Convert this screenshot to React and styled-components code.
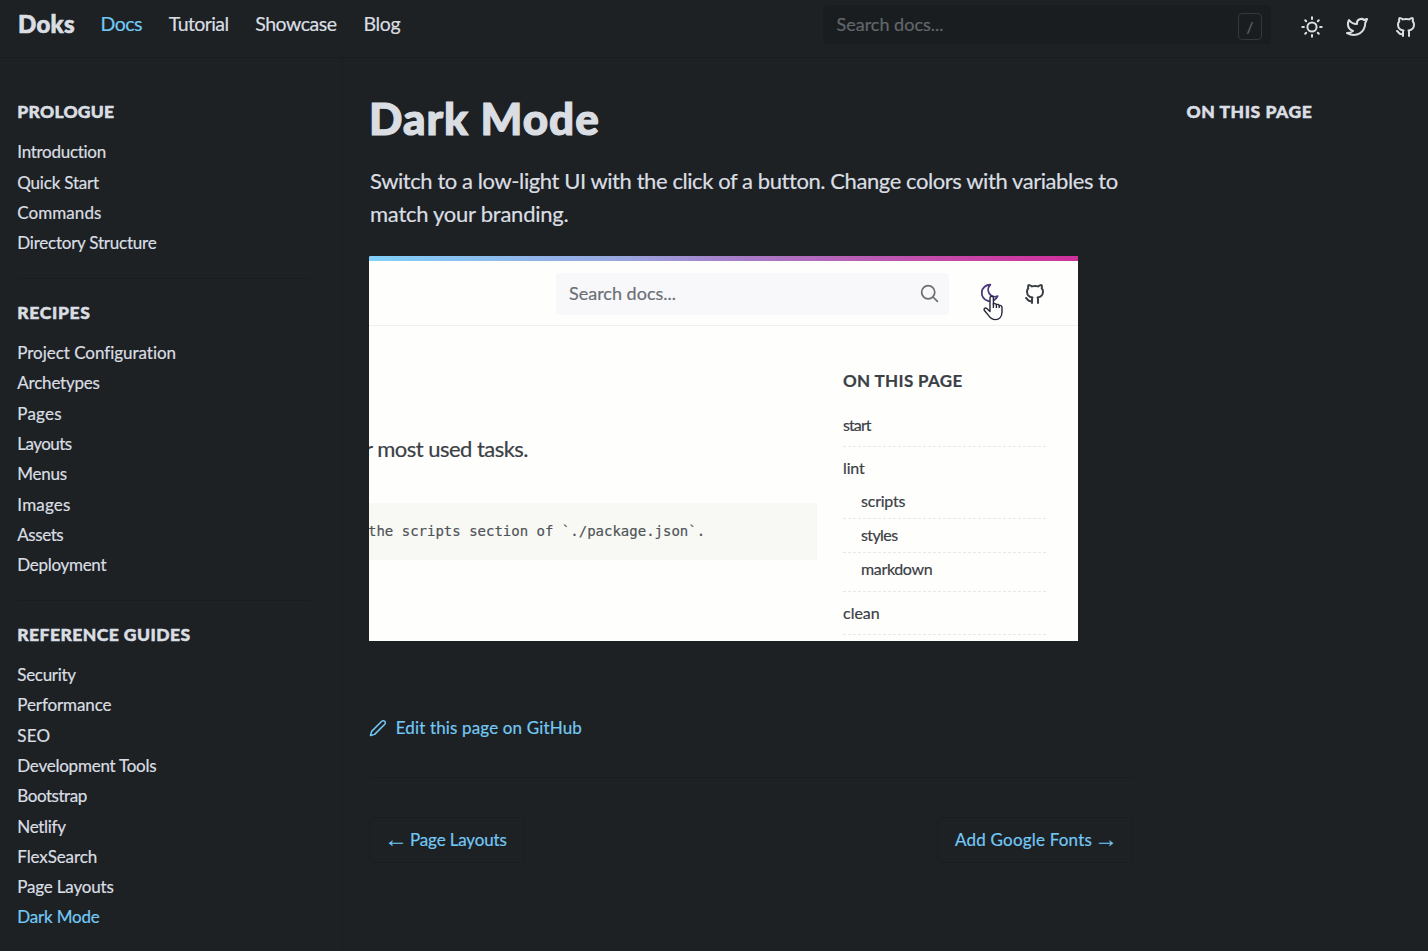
import React from "react";
import styled, { createGlobalStyle } from "styled-components";

const color = {
  bg: "#1d2124",
  line: "#1a1d20",
  field: "#1a1d1f",
  text: "#dadee2",
  muted: "#60676d",
  link: "#73c8f4",
};

const GlobalStyle = createGlobalStyle`
  *, *::before, *::after { box-sizing: border-box; }
  body {
    margin: 0;
    background: ${color.bg};
    color: ${color.text};
    font-family: "Lato", "Liberation Sans", sans-serif;
    font-size: 17px;
    -webkit-text-stroke: 0.2px currentColor;
    overflow: hidden;
  }
  a { color: inherit; text-decoration: none; }
  svg { display: block; flex: none; }
`;

const Page = styled.div`
  height: 951px;
  display: flex;
  flex-direction: column;
`;

/* Header */
const Header = styled.header`
  flex: none;
  height: 58px;
  display: flex;
  align-items: flex-start;
  padding-left: 18px;
  border-bottom: 1px solid ${color.line};
`;

const Brand = styled.a`
  width: 82.5px;
  padding-top: 9px;
  font-weight: 900;
  font-size: 24px;
  line-height: 30px;
  letter-spacing: 0.3px;
  -webkit-text-stroke-width: 0.7px;
`;

const Nav = styled.nav`
  flex: 1;
  display: flex;
  gap: 26.8px;
  padding-top: 9px;
`;

const NavLink = styled.a`
  font-size: 19.5px;
  line-height: 30px;
  letter-spacing: ${(p) => p.$track}px;
  color: ${(p) => (p.$active ? color.link : "inherit")};
`;

const SearchField = styled.div`
  width: 448px;
  height: 39px;
  margin-top: 5px;
  padding: 0 9px 0 13.5px;
  display: flex;
  align-items: center;
  justify-content: space-between;
  border-radius: 4px;
  background: ${color.field};
  color: ${color.muted};
  font-size: 18px;
`;

const Placeholder = styled.span`
  padding-bottom: ${(p) => p.$lift}px;
`;

const Key = styled.kbd`
  width: 24px;
  height: 27px;
  margin-top: 4px;
  display: flex;
  align-items: center;
  justify-content: center;
  border: 1px solid #33383c;
  border-radius: 4px;
  font-family: inherit;
  font-size: 15px;
`;

const Actions = styled.div`
  display: flex;
  padding: 15px 10px 0 29px;
`;

const IconLink = styled.a`
  width: 24px;
  margin-right: ${(p) => p.$gap || 0}px;
`;

/* Sidebar */
const Columns = styled.div`
  flex: 1;
  min-height: 0;
  display: flex;
`;

const Sidebar = styled.aside`
  width: 343px;
  flex: none;
  padding: 39.3px 31px 0 17.3px;
  border-right: 1px solid ${color.line};
`;

const Section = styled.section`
  & + & {
    margin-top: 19.1px;
    padding-top: 19.5px;
    border-top: 1px solid ${color.line};
  }
`;

const SectionTitle = styled.h3`
  margin: 0;
  font-weight: 900;
  font-size: 17.5px;
  line-height: 30px;
  white-space: nowrap;
  letter-spacing: ${(p) => p.$track}px;
  -webkit-text-stroke-width: 0.5px;
`;

const LinkList = styled.ul`
  list-style: none;
  margin: 10px 0 0;
  padding: 0;
`;

const LinkItem = styled.li`
  height: 30.3px;
  line-height: 30.3px;
  letter-spacing: ${(p) => p.$track}px;
  color: ${(p) => (p.$active ? color.link : "inherit")};
`;

/* Article */
const Article = styled.main`
  width: 764px;
  margin-left: 26px;
  padding-top: 35px;
`;

const Title = styled.h1`
  margin: 0;
  font-weight: 900;
  font-size: 44px;
  line-height: 50px;
  letter-spacing: 1px;
  -webkit-text-stroke-width: 1.2px;
`;

const Lead = styled.p`
  margin: 21px 0 26px 1px;
  font-size: 22px;
  line-height: 33px;
  white-space: nowrap;
`;

const LeadLine = styled.span`
  display: block;
  letter-spacing: ${(p) => p.$track}px;
`;

const EditLink = styled.a`
  display: flex;
  align-items: center;
  gap: 8.7px;
  margin-top: 73px;
  line-height: 27px;
  letter-spacing: 0.15px;
  color: ${color.link};
`;

const Pager = styled.nav`
  margin-top: 36px;
  padding-top: 39px;
  display: flex;
  justify-content: space-between;
  border-top: 1px solid ${color.line};
`;

const PagerLink = styled.a`
  height: 46px;
  padding: 0 17px 2px;
  display: flex;
  align-items: center;
  gap: 5px;
  border: 1px solid ${color.line};
  border-radius: 4px;
  letter-spacing: ${(p) => p.$track}px;
  color: ${color.link};
`;

const Arrow = styled.span`
  width: 18px;
  display: flex;
  justify-content: center;
  font-family: "Liberation Serif", serif;
  font-size: 24px;
  line-height: 18px;
  letter-spacing: 0;
  -webkit-text-stroke-width: 0;
`;

const Aside = styled.aside`
  margin-left: 53.5px;
  padding-top: 39.3px;
`;

/* Light-mode preview */
const Preview = styled.figure`
  width: 709px;
  height: 385px;
  margin: 0;
  overflow: hidden;
  border-top-left-radius: 2px;
  background: #fefefd;
  color: #3b4045;
`;

const Ribbon = styled.div`
  height: 4.5px;
  background: linear-gradient(90deg, #80d0fb 0%, #99a6df 36%, #a87dc9 52%, #c44ba9 80%, #d0309b 100%);
`;

const PreviewHeader = styled.div`
  height: 65.5px;
  padding: 12px 30px 0 187px;
  display: flex;
  border-bottom: 1.5px solid #efefef;
`;

const PreviewSearch = styled.div`
  width: 393px;
  height: 42px;
  padding: 0 9px 0 13px;
  display: flex;
  align-items: center;
  justify-content: space-between;
  border-radius: 4px;
  background: #f8f8fb;
  color: #6b7075;
  font-size: 18px;
`;

const PreviewAction = styled.div`
  position: relative;
  margin: 9px 0 0 ${(p) => p.$gap}px;
`;

const Pointer = styled.svg`
  position: absolute;
  left: 4px;
  top: 13px;
`;

const PreviewBody = styled.div`
  display: flex;
`;

const PreviewMain = styled.div`
  width: 448px;
  padding-top: 106px;
`;

const PreviewLead = styled.p`
  margin: 0 0 0 -4px;
  font-size: 22px;
  line-height: 34px;
  letter-spacing: -0.52px;
  white-space: nowrap;
`;

const Code = styled.pre`
  height: 57px;
  margin: 37px 0 0;
  text-indent: -1px;
  line-height: 57px;
  font-family: "DejaVu Sans Mono", monospace;
  font-size: 14px;
  color: #505558;
  background: #f8f9f5;
`;

const PreviewToc = styled.div`
  width: 203px;
  margin-left: 26px;
  padding-top: 40px;
`;

const TocTitle = styled.div`
  margin-bottom: 13px;
  font-weight: 700;
  line-height: 30px;
  letter-spacing: 0.35px;
`;

const TocRow = styled.div`
  padding: ${(p) => p.$top || 0}px 0 ${(p) => p.$bottom || 0}px ${(p) => (p.$nested ? 18 : 0)}px;
  border-bottom: ${(p) => (p.$plain ? "0" : "1px dashed #e6e8ea")};
  font-size: 16px;
  line-height: 31px;
  letter-spacing: ${(p) => p.$track}px;
`;

function Icon({ size = 24, stroke = 2, children }) {
  return (
    <svg width={size} height={size} viewBox="0 0 24 24" fill="none" stroke="currentColor"
      strokeWidth={stroke} strokeLinecap="round" strokeLinejoin="round">
      {children}
    </svg>
  );
}

const SunIcon = () => (
  <Icon>
    <circle cx="12" cy="12" r="4.6" />
    <path d="M2.300 12h1.600m8.100-9.700v1.600m8.100 8.100h1.600m-9.700 8.100v1.600M5.200 5.200l1 1m12.600-1-1 1m0 11.600 1 1m-12.600-1-1 1" />
  </Icon>
);

const TwitterIcon = () => (
  <Icon>
    <path d="M22 4.01c-1 .49-1.98.689-3 .99-1.121-1.265-2.783-1.335-4.38-.737S11.977 6.323 12 8v1c-3.245.083-6.135-1.395-8-4 0 0-4.182 7.433 4 11-1.872 1.247-3.739 2.088-6 2 3.308 1.803 6.913 2.423 10.034 1.517 3.58-1.04 6.522-3.723 7.651-7.742a13.84 13.84 0 0 0 .497-3.753c0-.249 1.51-2.772 1.818-4.013z" />
  </Icon>
);

const GithubIcon = () => (
  <Icon>
    <path d="M9 19c-4.3 1.4-4.3-2.5-6-3m12 5v-3.5c0-1 .1-1.4-.5-2 2.8-.3 5.5-1.4 5.5-6a4.6 4.6 0 0 0-1.3-3.2 4.2 4.2 0 0 0-.1-3.2s-1.1-.3-3.5 1.3a12.3 12.3 0 0 0-6.2 0C6.5 2.8 5.4 3.1 5.4 3.1a4.2 4.2 0 0 0-.1 3.2A4.6 4.6 0 0 0 4 9.5c0 4.6 2.7 5.7 5.5 6-.6.6-.6 1.2-.5 2V21" />
  </Icon>
);

const PencilIcon = () => (
  <Icon size={18}>
    <path d="M17 3a2.828 2.828 0 1 1 4 4L7.5 20.5 2 22l1.5-5.5L17 3z" />
  </Icon>
);

const SearchIcon = () => (
  <Icon size={21}>
    <circle cx="10.5" cy="10.5" r="7.5" />
    <path d="m21 21-5-5" />
  </Icon>
);

const MoonIcon = () => (
  <Icon size={22}>
    <path d="M12 3h.393a7.5 7.5 0 0 0 7.92 12.446A9 9 0 1 1 12 2.992z" stroke="#4d3a7d" />
  </Icon>
);

const sections = [
  { title: "PROLOGUE", track: 0.25, links: [
    ["Introduction", -0.28], ["Quick Start", -0.2], ["Commands", 0.06], ["Directory Structure", -0.23],
  ] },
  { title: "RECIPES", track: 0.65, links: [
    ["Project Configuration", -0.03], ["Archetypes", -0.21], ["Pages", 0.2], ["Layouts", -0.54],
    ["Menus", -0.28], ["Images", 0.2], ["Assets", -0.45], ["Deployment", -0.3],
  ] },
  { title: "REFERENCE GUIDES", track: 0.45, links: [
    ["Security", -0.3], ["Performance", -0.1], ["SEO", 0.2], ["Development Tools", -0.24],
    ["Bootstrap", -0.46], ["Netlify", -0.3], ["FlexSearch", -0.1], ["Page Layouts", -0.18], ["Dark Mode", -0.19],
  ] },
];

const tocRows = [
  { label: "start", $track: -0.9, $bottom: 6 },
  { label: "lint", $track: -0.14, $top: 5, $plain: true },
  { label: "scripts", $track: -0.22, $top: 2, $bottom: 2, $nested: true },
  { label: "styles", $track: -0.6, $bottom: 2, $nested: true },
  { label: "markdown", $track: -0.35, $nested: true, $bottom: 7 },
  { label: "clean", $track: 0, $top: 5, $bottom: 6 },
];

function LightPreview() {
  return (
    <Preview>
      <Ribbon />
      <PreviewHeader>
        <PreviewSearch>
          <Placeholder $lift={2}>Search docs...</Placeholder>
          <SearchIcon />
        </PreviewSearch>
        <PreviewAction $gap={30}>
          <MoonIcon />
          <Pointer width="21" height="26" viewBox="0 0 21 26" fill="#fff" stroke="#26263a" strokeWidth="1.4" strokeLinejoin="round">
            <path d="M7 14.500V3a1.700 1.700 0 0 1 3.400 0v6.200c.6-1 2.800-.8 3 .6.8-.8 2.600-.5 2.800.9.9-.6 2.800-.2 2.800 1.600V17c0 4.600-2.700 7.600-6.500 7.600-3.700 0-5.100-1.400-6.600-3.700L1.400 15.500c-1-1.900.9-3.300 2.400-1.900L7 16.500z" />
            <path d="M10.400 8.500v4.500m3-3v3m2.800-2.400V13" fill="none" />
          </Pointer>
        </PreviewAction>
        <PreviewAction $gap={22}>
          <GithubIcon />
        </PreviewAction>
      </PreviewHeader>
      <PreviewBody>
        <PreviewMain>
          <PreviewLead>r most used tasks.</PreviewLead>
          <Code>the scripts section of `./package.json`.</Code>
        </PreviewMain>
        <PreviewToc>
          <TocTitle>ON THIS PAGE</TocTitle>
          {tocRows.map(({ label, ...row }) => (
            <TocRow key={label} {...row}>{label}</TocRow>
          ))}
        </PreviewToc>
      </PreviewBody>
    </Preview>
  );
}

export default function App() {
  return (
    <Page>
      <GlobalStyle />
      <Header>
        <Brand href="#">Doks</Brand>
        <Nav>
          <NavLink href="#" $track={-0.5} $active>Docs</NavLink>
          <NavLink href="#" $track={-0.6}>Tutorial</NavLink>
          <NavLink href="#" $track={-0.47}>Showcase</NavLink>
          <NavLink href="#" $track={-0.35}>Blog</NavLink>
        </Nav>
        <SearchField>
          <Placeholder $lift={1}>Search docs...</Placeholder>
          <Key>/</Key>
        </SearchField>
        <Actions>
          <IconLink href="#" $gap={21}><SunIcon /></IconLink>
          <IconLink href="#" $gap={25}><TwitterIcon /></IconLink>
          <IconLink href="#"><GithubIcon /></IconLink>
        </Actions>
      </Header>
      <Columns>
        <Sidebar>
          {sections.map((s) => (
            <Section key={s.title}>
              <SectionTitle $track={s.track}>{s.title}</SectionTitle>
              <LinkList>
                {s.links.map(([label, track]) => (
                  <LinkItem key={label} $track={track} $active={s.title === "REFERENCE GUIDES" && label === "Dark Mode"}>
                    <a href="#">{label}</a>
                  </LinkItem>
                ))}
              </LinkList>
            </Section>
          ))}
        </Sidebar>
        <Article>
          <Title>Dark Mode</Title>
          <Lead>
            <LeadLine $track={-0.42}>Switch to a low-light UI with the click of a button. Change colors with variables to </LeadLine>
            <LeadLine $track={-0.25}>match your branding.</LeadLine>
          </Lead>
          <LightPreview />
          <EditLink href="#"><PencilIcon />Edit this page on GitHub</EditLink>
          <Pager>
            <PagerLink href="#" $track={-0.15}><Arrow>←</Arrow>Page Layouts</PagerLink>
            <PagerLink href="#" $track={0.2}>Add Google Fonts<Arrow>→</Arrow></PagerLink>
          </Pager>
        </Article>
        <Aside>
          <SectionTitle $track={0.55}>ON THIS PAGE</SectionTitle>
        </Aside>
      </Columns>
    </Page>
  );
}
